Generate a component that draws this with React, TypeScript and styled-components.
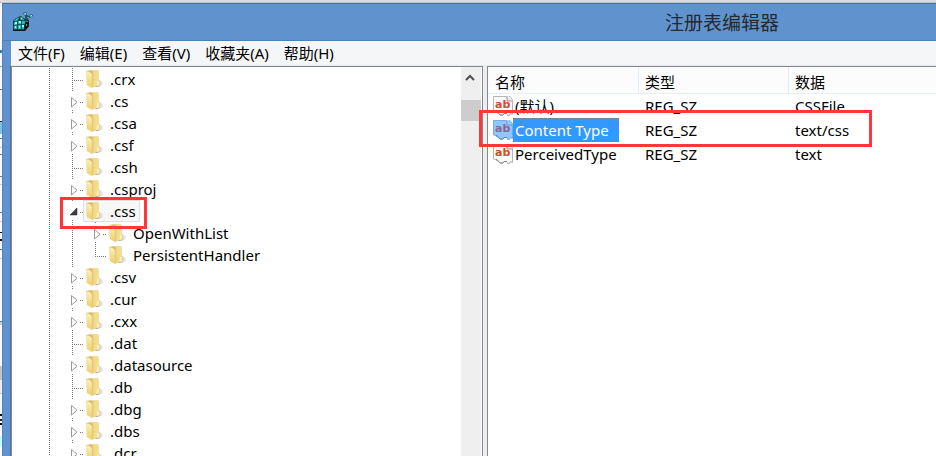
import React from 'react';
import styled, { createGlobalStyle, css } from 'styled-components';

const GlobalStyle = createGlobalStyle`
  * { box-sizing: border-box; }
  html, body { margin: 0; padding: 0; }
  body {
    font-family: "Noto Sans", "Noto Sans CJK SC", sans-serif;
    font-size: 15px;
    line-height: 22px;
    color: #000;
    background: #fff;
    overflow: hidden;
  }
  button { font: inherit; color: inherit; border: 0; background: none; padding: 0; margin: 0; text-align: left; }
`;

const Desktop = styled.div`
  display: flex;
  height: 100vh;
  padding-top: 3px;
  background: linear-gradient(#dcddd8 0 2px, #bcc5cc 2px 3px, #fafafa 3px);
`;

const BackgroundEdge = styled.div`
  flex: 0 0 2px;
  background: linear-gradient(
    #fafafa 0 47px, #2f7dc4 47px 50px, #fafafa 50px 63px, #999 63px 64px,
    #fafafa 64px 86px, #777 86px 87px, #f5f5f5 87px 118px, #111 118px 119px,
    #7cc0f4 119px 131px, #fafafa 131px 135px, #2f7dc4 135px 136px,
    #fafafa 136px 144px, #ccc 144px 145px, #fafafa 145px 151px, #777 151px 152px,
    #fafafa 152px 173px, #777 173px 174px, #fafafa 174px 181px, #ccc 181px 182px,
    #fafafa 182px 209px, #2f7dc4 209px 210px, #fafafa 210px 218px, #ccc 218px 219px,
    #fafafa 219px 229px, #111 229px 230px, #fafafa 230px 236px, #111 236px 238px,
    #fafafa 238px 246px, #2f7dc4 246px 247px, #fafafa 247px 255px, #ccc 255px 256px,
    #fafafa 256px 318px, #4a88b4 318px 319px, #ccc 319px 322px, #fafafa 322px 363px,
    #c4c4c4 363px 377px, #ededed 377px 390px, #ccc 390px 391px, #f2fafa 391px 411px,
    #000 411px 413px, #fafafa 413px 416px, #222 416px 418px, #fafafa 418px 420px,
    #000 420px 422px, #fafafa 422px 433px, #c4ffff 433px 444px, #fafafa 444px
  );
`;

const Window = styled.div`
  flex: 1;
  min-width: 0;
  display: flex;
  flex-direction: column;
  padding-left: 8px;
  background: #6093cd;
  border-top: 1px solid #46709f;
  border-left: 1px solid #5685bd;
`;

const TitleBar = styled.header`
  flex: 0 0 37px;
  display: flex;
  align-items: center;
  border-bottom: 1px solid #4c80b8;
  margin-left: -8px;
  padding-left: 10px;
`;

const Title = styled.h1`
  margin: 0 157px 0 auto;
  font-family: "Noto Sans CJK SC", sans-serif;
  font-size: 19px;
  line-height: 24px;
  font-weight: 400;
  color: #26292e;
`;

const MenuBar = styled.nav`
  flex: 0 0 25px;
  display: flex;
  gap: 15px;
  padding-left: 7px;
  background: #f5f6f8;
  border-bottom: 1px solid #e8e8ea;
`;

const MenuItem = styled.button`
  white-space: nowrap;
  line-height: 24px;
`;

const Panes = styled.main`
  flex: 1;
  min-height: 0;
  display: grid;
  grid-template-columns: 472px 1fr;
  gap: 4px;
  background: #eeeeee;
  border-left: 1px solid #51749f;
  margin-left: -1px;
`;

const TreePane = styled.section`
  display: flex;
  overflow: hidden;
  background: #fff;
  border: solid #828790;
  border-width: 1px 1px 0;
`;

const Tree = styled.ul`
  flex: 1;
  margin: 0;
  padding: 1px 0 0 35px;
  list-style: none;
`;

const TreeRow = styled.li`
  position: relative;
  display: flex;
  height: 22px;
`;

const Indent = styled.span`
  flex: 0 0 23px;
  background: repeating-linear-gradient(#777 0 1px, transparent 1px 2px) 2px 0 / 1px 100% no-repeat;
`;

const Branch = styled.button`
  flex: 0 0 13px;
  svg { display: block; }
`;

const NodeLabel = styled.button<{ $selected?: boolean }>`
  display: flex;
  align-items: center;
  gap: 6px;
  height: 22px;
  padding: 0 3px 0 2px;
  border: 1px solid transparent;
  line-height: 20px;
  white-space: nowrap;
  ${p => p.$selected && css`
    background: #f7f7f7;
    border-color: #dedede;
  `}
`;

const ScrollBar = styled.div`
  flex: 0 0 21px;
  display: flex;
  flex-direction: column;
  background: #efefef;
  border-right: 1px solid #fff;
`;

const ScrollUp = styled.button`
  display: flex;
  align-items: flex-start;
  height: 33px;
  padding: 7px 0 0 4px;
`;

const ScrollThumb = styled.div`
  height: 21px;
  background: #cdcdcd;
`;

const ValuePane = styled.section`
  min-width: 0;
  background: #fff;
  border: solid #828790;
  border-width: 1px 0 0 1px;
`;

const ValueTable = styled.table`
  width: 100%;
  table-layout: fixed;
  border-collapse: separate;
  border-spacing: 0;
`;

const HeadCell = styled.th<{ $width?: number }>`
  width: ${p => (p.$width ? `${p.$width}px` : 'auto')};
  height: 27px;
  padding: 3px 0 0 6px;
  text-align: left;
  font-weight: 400;
  background: #fcfcfd;
  border-bottom: 1px solid #e6eef8;
  border-right: ${p => (p.$width ? '1px solid #e2ecf8' : '0')};
  &:first-child { padding-left: 7px; }
`;

const Cell = styled.td`
  height: 24px;
  padding: 0 0 0 6px;
  white-space: nowrap;
`;

const NameCell = styled(Cell)`
  position: relative;
  padding-left: 5px;
`;

const NameContent = styled.div`
  display: flex;
  align-items: center;
`;

const ValueName = styled.button<{ $selected?: boolean }>`
  height: 24px;
  padding: 0 9px 0 1px;
  border: 1px solid transparent;
  ${p => p.$selected && css`
    color: #fff;
    background: #3399ff;
    border: 1px dotted #b8742c;
  `}
`;

const Highlight = styled.span<{ $area: 'key' | 'value' }>`
  position: absolute;
  z-index: 2;
  pointer-events: none;
  border: 3px solid #ff3737;
  ${p => p.$area === 'key'
    ? css`left: 13px; top: -3px; width: 87px; height: 32px;`
    : css`left: -9px; top: -8px; width: 393px; height: 37px;`}
`;

const FolderIcon = () => (
  <svg width="18" height="20" viewBox="0 0 18 20" aria-hidden="true">
    <defs>
      <linearGradient id="folderLeft" x1="0" y1="0" x2="0" y2="1">
        <stop offset="0" stopColor="#fcf0bb" />
        <stop offset="1" stopColor="#efce6c" />
      </linearGradient>
      <linearGradient id="folderRight" x1="0" y1="0" x2="1" y2="0">
        <stop offset=".3" stopColor="#cdb168" />
        <stop offset=".55" stopColor="#f0d987" />
        <stop offset="1" stopColor="#f6e095" />
      </linearGradient>
      <linearGradient id="folderShade" x1="0" x2="1">
        <stop offset="0" stopColor="#888" stopOpacity=".9" />
        <stop offset="1" stopColor="#bbb" stopOpacity=".15" />
      </linearGradient>
    </defs>
    <path d="M9 18 13 11 17 13 17.500 16 12 18Z" fill="url(#folderShade)" />
    <path d="M1 2 4 1.500 12 1.500 12.500 3V11L13.500 13V16L6 18.500 4 17Z" fill="url(#folderRight)" stroke="#e6cd7d" strokeWidth=".5" />
    <path d="M0.500 2 4 3 6 5.500V18.500L1 16Z" fill="url(#folderLeft)" stroke="#ecd178" strokeWidth=".5" />
    <path d="M11 12 13 12V16L10.500 17Z" fill="#fdf0b4" />
  </svg>
);

const StringValueIcon = ({ selected }: { selected?: boolean }) => (
  <svg width="20" height="20" viewBox="0 0 20 20" aria-hidden="true">
    <path
      d="M.5.500H13.500L15 1.500 16 .500H17L19.500 4V18.500L17 17.500 16.500 19.500H14.500L14 17.500H11L10 19H7L5.500 17H4L3 15.500.5 15Z"
      fill={selected ? '#90c6fb' : '#fcfcfc'}
      stroke={selected ? '#6eafea' : '#b5b5b5'}
    />
    <path d="M14 .500V5H19" fill={selected ? '#a4d0fa' : '#e5e5e5'} stroke={selected ? '#5b9bd5' : '#999'} />
    <path d="M3 15.500H4L5.500 17.500 7 19H10L11 17.500H14" fill="none" stroke={selected ? '#4b8fca' : '#8c8c8c'} />
    <text x="2" y="12" fontFamily="DejaVu Sans, sans-serif" fontWeight="700" fontSize="11" fill={selected ? '#8a6590' : '#d5492a'}>ab</text>
  </svg>
);

const RegistryIcon = () => (
  <svg width="20" height="20" viewBox="0 0 20 20" aria-hidden="true">
    <path d="M0 19V9L3 6 8 4 12 7 14 6 16 9V14L12 19Z" fill="#08363b" />
    <path d="M1 9 4 6 6 6 4 9ZM7 5.500 9 5 11 8 8 8ZM1 10H4V13H1ZM5 9H8V12H5ZM9 9H12V12H9ZM1 14H4V17H1ZM5 13H8V17H5ZM9 13H11V17H9Z" fill="#35bcbc" stroke="#229a9d" strokeWidth=".5" />
    <path d="M2 10H4V12H2ZM6 9H8V11H6ZM9 13H11V15H9ZM6 14H7V16H6ZM2 14H3V16H2ZM8 6H9V7H8Z" fill="#a5f5f3" />
    <path d="M12 11 16 8 16 14 12 19H0V18H11Z" fill="#071717" />
    <path d="M13 12H14V14H13ZM13 9H15V10H13Z" fill="#2aa6a6" />
    <path d="M10 1 13 0 14 3 16 4 18 2 20 3 19 5 16 6 14 8 12 6 12 4Z" fill="#29505b" />
    <path d="M11 1H13V3H11ZM17 3H19V5H17ZM14 5H16V6H14Z" fill="#4cb6bc" />
    <path d="M12 1H13V2H12ZM18 3H19V4H18Z" fill="#bdf3f5" />
  </svg>
);

type State = 'leaf' | 'last' | 'closed' | 'open';

const BranchDrawing = ({ state }: { state: State }) => (
  <svg width="13" height="22" viewBox="0 0 13 22" aria-hidden="true">
    {state === 'leaf' && <path d="M2.500 0V22" stroke="#777" strokeDasharray="1 1" />}
    {state === 'last' && <path d="M2.500 0V13" stroke="#777" strokeDasharray="1 1" />}
    {(state === 'leaf' || state === 'last') && <path d="M4 12.500H13" stroke="#777" strokeDasharray="1 1" />}
    {(state === 'closed' || state === 'open') && (
      <path d="M2.500 0V2M2.500 20V22M12 12.500H13M10 12.500H11" stroke="#777" strokeDasharray="1 1" />
    )}
    {state === 'closed' && <path d="M1.500 7.500V17L7 12.200Z" fill="#fff" stroke="#989898" />}
    {state === 'open' && <path d="M7 8V15H0Z" fill="#404040" stroke="#222" strokeWidth=".5" />}
  </svg>
);

const keys: { name: string; state: State; level?: number }[] = [
  { name: '.crx', state: 'leaf' },
  { name: '.cs', state: 'closed' },
  { name: '.csa', state: 'closed' },
  { name: '.csf', state: 'closed' },
  { name: '.csh', state: 'leaf' },
  { name: '.csproj', state: 'closed' },
  { name: '.css', state: 'open' },
  { name: 'OpenWithList', state: 'closed', level: 2 },
  { name: 'PersistentHandler', state: 'last', level: 2 },
  { name: '.csv', state: 'closed' },
  { name: '.cur', state: 'closed' },
  { name: '.cxx', state: 'closed' },
  { name: '.dat', state: 'leaf' },
  { name: '.datasource', state: 'closed' },
  { name: '.db', state: 'leaf' },
  { name: '.dbg', state: 'closed' },
  { name: '.dbs', state: 'closed' },
  { name: '.dcr', state: 'closed' },
];

const values = [
  { name: '(默认)', type: 'REG_SZ', data: 'CSSFile' },
  { name: 'Content Type', type: 'REG_SZ', data: 'text/css' },
  { name: 'PerceivedType', type: 'REG_SZ', data: 'text' },
];

const menus = ['文件(F)', '编辑(E)', '查看(V)', '收藏夹(A)', '帮助(H)'];

export default function App() {
  return (
    <>
      <GlobalStyle />
      <Desktop>
        <BackgroundEdge />
        <Window>
          <TitleBar>
            <RegistryIcon />
            <Title>注册表编辑器</Title>
          </TitleBar>
          <MenuBar>
            {menus.map(m => <MenuItem key={m}>{m}</MenuItem>)}
          </MenuBar>
          <Panes>
            <TreePane>
              <Tree role="tree">
                {keys.map(({ name, state, level = 1 }) => (
                  <TreeRow key={name} role="treeitem" aria-level={level}>
                    <Indent />
                    {level > 1 && <Indent />}
                    <Branch aria-label={`Toggle ${name}`}><BranchDrawing state={state} /></Branch>
                    <NodeLabel $selected={name === '.css'}>
                      <FolderIcon />
                      {name}
                    </NodeLabel>
                    {name === '.css' && <Highlight $area="key" />}
                  </TreeRow>
                ))}
              </Tree>
              <ScrollBar>
                <ScrollUp aria-label="Scroll up">
                  <svg width="10" height="8" viewBox="0 0 10 8">
                    <path d="M1 6 5 2 9 6" fill="none" stroke="#505050" strokeWidth="2" />
                  </svg>
                </ScrollUp>
                <ScrollThumb />
              </ScrollBar>
            </TreePane>
            <ValuePane>
              <ValueTable>
                <thead>
                  <tr>
                    <HeadCell $width={151}>名称</HeadCell>
                    <HeadCell $width={150}>类型</HeadCell>
                    <HeadCell>数据</HeadCell>
                  </tr>
                </thead>
                <tbody>
                  {values.map(v => {
                    const selected = v.name === 'Content Type';
                    return (
                      <tr key={v.name}>
                        <NameCell>
                          <NameContent>
                            <StringValueIcon selected={selected} />
                            <ValueName $selected={selected}>{v.name}</ValueName>
                          </NameContent>
                          {selected && <Highlight $area="value" />}
                        </NameCell>
                        <Cell>{v.type}</Cell>
                        <Cell>{v.data}</Cell>
                      </tr>
                    );
                  })}
                </tbody>
              </ValueTable>
            </ValuePane>
          </Panes>
        </Window>
      </Desktop>
    </>
  );
}
